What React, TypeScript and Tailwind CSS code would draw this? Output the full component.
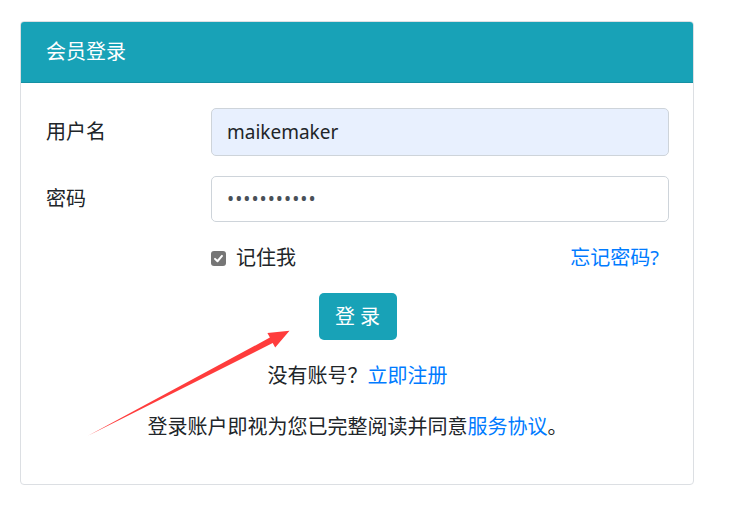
import React from "react";

const font = {
  fontFamily: '"Noto Sans", "Noto Sans CJK SC", sans-serif',
};

const CheckMark = () => (
  <span className="flex h-[15px] w-[15px] items-center justify-center rounded-[3px] bg-[#767676]">
    <svg width="11" height="11" viewBox="0 0 12 12" fill="none">
      <path d="M2.2 6.4 L4.9 9 L9.8 3.2" stroke="#fff" strokeWidth="2.2" strokeLinecap="round" strokeLinejoin="round" />
    </svg>
  </span>
);

// red annotation arrow drawn over the form
const Arrow = () => (
  <svg className="pointer-events-none absolute left-0 top-0" width="732" height="508">
    <polygon
      points="87.5,436 269.9,337.6 267.4,333 289.5,330.8 275.2,347.6 272.7,343"
      fill="#ff3c3c"
    />
  </svg>
);

export default function App() {
  return (
    <div className="relative h-[508px] w-[732px] bg-white pl-[20px] pt-[21px] text-[#212529]" style={font}>
      <div className="w-[674px] overflow-hidden rounded-[4px] border border-[#dcdfe3]">
        {/* header */}
        <div className="flex h-[61px] items-center border-b border-[#1590a3] bg-[#18a2b7] pl-[25px] text-[20px] text-white">
          会员登录
        </div>

        <div className="pb-[42px] pl-[25px] pr-[24px] pt-[25px]">
          <div className="flex items-center">
            <label className="w-[165px] text-[20px] leading-none">用户名</label>
            <input
              readOnly
              value="maikemaker"
              className="h-[48px] flex-1 rounded-[5px] border border-[#ced4da] bg-[#e8f0fe] px-[15px] text-[19px] text-[#212529] outline-none"
              style={font}
            />
          </div>

          <div className="mt-[20px] flex items-center">
            <label className="w-[165px] text-[20px] leading-none">密码</label>
            <input
              readOnly
              value="•••••••••••"
              className="h-[46px] flex-1 rounded-[5px] border border-[#ced4da] bg-white px-[15px] text-[19px] tracking-[1px] text-[#495057] outline-none"
              style={font}
            />
          </div>

          <div className="mt-[21px] flex h-[30px] items-center justify-between pl-[165px] pr-[10px]">
            <div className="flex items-center gap-[10px]">
              <CheckMark />
              <span className="text-[20px]">记住我</span>
            </div>
            <a className="text-[20px] text-[#007bff]">忘记密码?</a>
          </div>

          <div className="mt-[20px] flex justify-center">
            <button className="h-[47px] w-[78px] rounded-[5px] bg-[#18a2b7] text-[20px] text-white" style={font}>
              登 录
            </button>
          </div>

          <p className="mt-[21px] text-center text-[20px] leading-[30px]">
            没有账号？<a className="text-[#007bff]">立即注册</a>
          </p>

          <p className="mt-[21px] text-center text-[20px] leading-[30px]">
            登录账户即视为您已完整阅读并同意<a className="text-[#007bff]">服务协议</a>。
          </p>
        </div>
      </div>
      <Arrow />
    </div>
  );
}
